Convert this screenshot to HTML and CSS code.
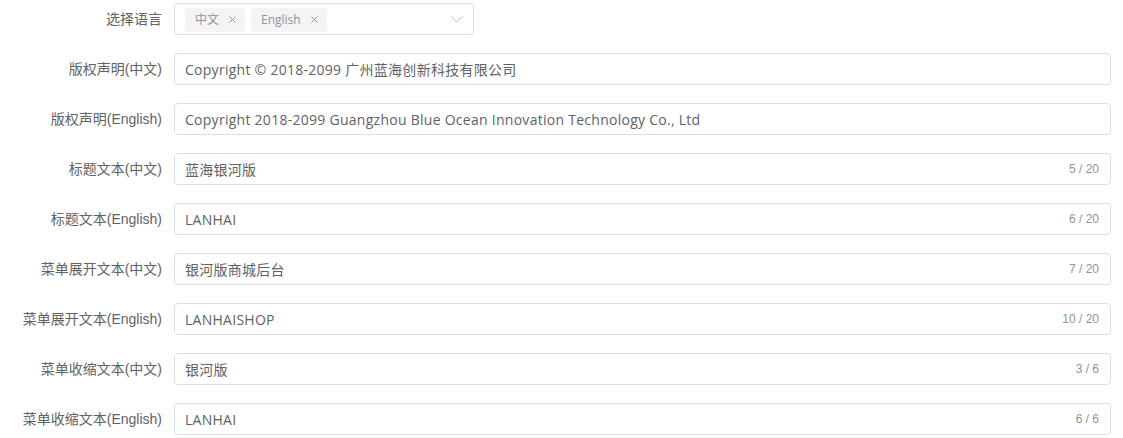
FILE: index.html
```html
<!DOCTYPE html>
<html lang="zh-CN">
<head>
<meta charset="utf-8">
<title>设置</title>
<link rel="stylesheet" href="styles.css">
</head>
<body>
<form class="form">
  <div class="form-item">
    <label class="label">选择语言</label>
    <div class="control">
      <div class="select">
        <div class="tags">
          <span class="tag">中文<svg class="tag-close" width="7" height="7" viewBox="0 0 7 7"><path d="M0.5 0.5 L6.5 6.5 M6.5 0.5 L0.5 6.5" stroke="#909399" stroke-width="1" fill="none"/></svg></span>
          <span class="tag">English<svg class="tag-close" width="7" height="7" viewBox="0 0 7 7"><path d="M0.5 0.5 L6.5 6.5 M6.5 0.5 L0.5 6.5" stroke="#909399" stroke-width="1" fill="none"/></svg></span>
        </div>
        <svg class="arrow" width="12" height="8" viewBox="0 0 12 8"><path d="M0.5 1.5 L6 7 L11.5 1.5" fill="none" stroke="#c0c4cc" stroke-width="1"/></svg>
      </div>
    </div>
  </div>
  <div class="form-item">
    <label class="label">版权声明(中文)</label>
    <div class="control"><div class="input"><span class="value">Copyright © 2018-2099 广州蓝海创新科技有限公司</span></div></div>
  </div>
  <div class="form-item">
    <label class="label">版权声明(English)</label>
    <div class="control"><div class="input"><span class="value">Copyright 2018-2099 Guangzhou Blue Ocean Innovation Technology Co., Ltd</span></div></div>
  </div>
  <div class="form-item">
    <label class="label">标题文本(中文)</label>
    <div class="control"><div class="input"><span class="value">蓝海银河版</span><span class="count">5 / 20</span></div></div>
  </div>
  <div class="form-item">
    <label class="label">标题文本(English)</label>
    <div class="control"><div class="input"><span class="value">LANHAI</span><span class="count">6 / 20</span></div></div>
  </div>
  <div class="form-item">
    <label class="label">菜单展开文本(中文)</label>
    <div class="control"><div class="input"><span class="value">银河版商城后台</span><span class="count">7 / 20</span></div></div>
  </div>
  <div class="form-item">
    <label class="label">菜单展开文本(English)</label>
    <div class="control"><div class="input"><span class="value">LANHAISHOP</span><span class="count">10 / 20</span></div></div>
  </div>
  <div class="form-item">
    <label class="label">菜单收缩文本(中文)</label>
    <div class="control"><div class="input"><span class="value">银河版</span><span class="count">3 / 6</span></div></div>
  </div>
  <div class="form-item">
    <label class="label">菜单收缩文本(English)</label>
    <div class="control"><div class="input"><span class="value">LANHAI</span><span class="count">6 / 6</span></div></div>
  </div>
</form>
</body>
</html>
```
FILE: styles.css
```css
html, body {
  margin: 0;
  padding: 0;
  background: #ffffff;
}
body {
  font-family: "Liberation Sans", Arial, "Noto Sans CJK SC", sans-serif;
  font-size: 14px;
  color: #606266;
}
.form {
  padding: 3px 12px 0 0;
  display: flex;
  flex-direction: column;
  gap: 18px;
}
.form-item {
  display: flex;
  align-items: center;
  height: 32px;
}
.label {
  width: 174px;
  box-sizing: border-box;
  padding-right: 12px;
  text-align: right;
  font-size: 14px;
  color: #606266;
  line-height: 32px;
  flex: none;
}
.control {
  flex: 1;
  min-width: 0;
}
.select {
  width: 300px;
  height: 32px;
  box-sizing: border-box;
  border: 1px solid #dcdfe6;
  border-radius: 4px;
  display: flex;
  align-items: center;
  justify-content: space-between;
  padding: 1px 10px 0 10px;
}
.tags {
  display: flex;
  gap: 6px;
  align-items: center;
}
.tag {
  height: 24px;
  box-sizing: border-box;
  background: #f4f4f5;
  border-radius: 4px;
  color: #909399;
  font-family: "Open Sans", "Noto Sans CJK SC", sans-serif;
  font-size: 12px;
  line-height: 24px;
  padding: 0 9px 0 10px;
  display: inline-flex;
  align-items: center;
  gap: 10px;
}
.tag-close {
  flex: none;
}
.arrow {
  flex: none;
  margin-top: -1px;
}
.input {
  height: 32px;
  box-sizing: border-box;
  border: 1px solid #dcdfe6;
  border-radius: 4px;
  display: flex;
  align-items: center;
  justify-content: space-between;
  padding: 0 11px 0 10px;
}
.value {
  font-family: "Open Sans", "Noto Sans CJK SC", sans-serif;
  font-size: 14px;
  letter-spacing: 0.27px;
  color: #606266;
  white-space: nowrap;
}
.count {
  font-family: "Liberation Sans", Arial, sans-serif;
  font-size: 12px;
  color: #909399;
}
```
